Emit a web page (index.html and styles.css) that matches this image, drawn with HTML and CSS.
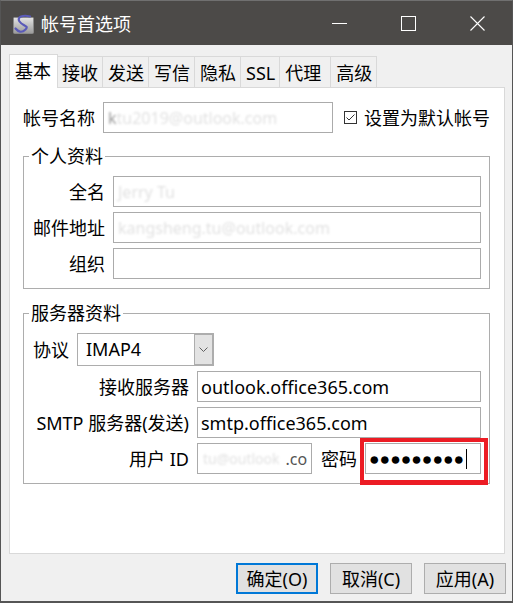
FILE: index.html
```html
<!DOCTYPE html>
<html lang="zh-CN">
<head>
<meta charset="utf-8">
<title>帐号首选项</title>
<link rel="stylesheet" href="styles.css">
</head>
<body>
<div class="window">
  <div class="titlebar">
    <svg class="app-icon" viewBox="0 0 21 20">
      <defs>
        <linearGradient id="ig" x1="0" y1="0" x2="0" y2="1">
          <stop offset="0" stop-color="#e4e4e4"/>
          <stop offset="1" stop-color="#9a9a9a"/>
        </linearGradient>
      </defs>
      <rect x="0.5" y="3.5" width="20" height="16" rx="1" fill="url(#ig)" stroke="#8a8a8a"/>
      <path d="M17 2.5 C 10 0.5, 3.5 3, 6.5 7.5 S 16.5 11.5, 12.5 15.5 S 5 17.5, 2.5 14.5" fill="none" stroke="#5a5ab8" stroke-width="2.2" stroke-linecap="round"/>
    </svg>
    <span class="title">帐号首选项</span>
    <div class="caption">
      <div class="cap-btn">
        <svg viewBox="0 0 15 15"><path d="M0 7.5 H15" stroke="#fff" stroke-width="1"/></svg>
      </div>
      <div class="cap-btn">
        <svg viewBox="0 0 15 15"><rect x="0.5" y="0.5" width="14" height="14" fill="none" stroke="#fff" stroke-width="1"/></svg>
      </div>
      <div class="cap-btn">
        <svg viewBox="0 0 15 15"><path d="M0.5 0.5 L14.5 14.5 M14.5 0.5 L0.5 14.5" stroke="#fff" stroke-width="1.1"/></svg>
      </div>
    </div>
  </div>

  <div class="client">
    <div class="tabs">
      <div class="tab active">基本</div>
      <div class="tab">接收</div>
      <div class="tab">发送</div>
      <div class="tab">写信</div>
      <div class="tab">隐私</div>
      <div class="tab">SSL</div>
      <div class="tab tab-wide">代理</div>
      <div class="tab">高级</div>
    </div>

    <div class="panel">
      <div class="account-row">
        <span class="lbl">帐号名称</span>
        <div class="field account-field"><span class="redacted dark-start">k</span><span class="redacted">tu2019@outlook.com</span></div>
        <div class="check-wrap">
          <svg class="checkbox" viewBox="0 0 13 13">
            <rect x="0.5" y="0.5" width="12" height="12" fill="#fff" stroke="#333"/>
            <path d="M2.5 6.5 L5 9 L10.5 3.5" fill="none" stroke="#333" stroke-width="1"/>
          </svg>
          <span>设置为默认帐号</span>
        </div>
      </div>

      <fieldset class="group personal">
        <legend>个人资料</legend>
        <div class="form-grid personal-grid">
          <span class="lbl right">全名</span>
          <div class="field"><span class="redacted">Jerry Tu</span></div>
          <span class="lbl right">邮件地址</span>
          <div class="field"><span class="redacted">kangsheng.tu@outlook.com</span></div>
          <span class="lbl right">组织</span>
          <div class="field"></div>
        </div>
      </fieldset>

      <fieldset class="group server">
        <legend>服务器资料</legend>
        <div class="proto-row">
          <span class="lbl">协议</span>
          <div class="select">
            <span class="select-value">IMAP4</span>
            <span class="select-btn">
              <svg viewBox="0 0 9 5"><path d="M0.5 0.5 L4.5 4.5 L8.5 0.5" fill="none" stroke="#606060" stroke-width="1"/></svg>
            </span>
          </div>
        </div>
        <div class="form-grid server-grid">
          <span class="lbl right">接收服务器</span>
          <div class="field">outlook.office365.com</div>
          <span class="lbl right">SMTP 服务器(发送)</span>
          <div class="field">smtp.office365.com</div>
          <span class="lbl right">用户 ID</span>
          <div class="cred-row">
            <div class="field user-id"><span class="redacted id-part">tu@outlook</span><span class="tail">.co</span></div>
            <span class="lbl pw-label">密码</span>
            <div class="pw-wrap">
              <div class="field pw"><span class="dots">●●●●●●●●●</span><span class="caret"></span></div>
              <div class="highlight"></div>
            </div>
          </div>
        </div>
      </fieldset>
    </div>

    <div class="buttons">
      <div class="btn default">确定(O)</div>
      <div class="btn">取消(C)</div>
      <div class="btn">应用(A)</div>
    </div>
  </div>
</div>
</body>
</html>
```

FILE: styles.css
```css
html, body {
  margin: 0;
  padding: 0;
}
body {
  width: 513px;
  height: 603px;
  overflow: hidden;
  font-family: "Noto Sans", "Noto Sans CJK SC", sans-serif;
  font-size: 18px;
  color: #000;
  background: #4c4a48;
}
.window {
  box-sizing: border-box;
  width: 513px;
  height: 603px;
  display: flex;
  flex-direction: column;
  border: 1px solid #555;
  border-top-color: #707070;
  border-bottom-width: 2px;
  background: #f0f0f0;
}
.titlebar {
  flex: none;
  height: 44px;
  background: #4c4a48;
  color: #fff;
  display: flex;
  align-items: center;
}
.app-icon {
  width: 21px;
  height: 20px;
  margin-left: 12px;
  margin-right: 7px;
  margin-top: 2px;
}
.title {
  font-size: 18px;
  line-height: 24px;
  margin-top: 1px;
}
.caption {
  margin-left: auto;
  display: flex;
  height: 100%;
}
.cap-btn {
  width: 69px;
  display: flex;
  align-items: center;
  justify-content: center;
}
.cap-btn svg {
  width: 15px;
  height: 15px;
  display: block;
  margin-top: 1px;
}

.client {
  flex: 1;
  min-height: 0;
  display: flex;
  flex-direction: column;
  padding: 9px 7px 7px 8px;
}

.tabs {
  flex: none;
  height: 33px;
  display: flex;
  align-items: flex-end;
  padding-left: 2px;
  position: relative;
  z-index: 1;
}
.tab {
  box-sizing: border-box;
  height: 31px;
  line-height: 30px;
  padding: 1px 4px 0 5px;
  border: 1px solid #d9d9d9;
  border-bottom: none;
  border-right: none;
  background: #f0f0f0;
  white-space: nowrap;
}
.tab:last-child {
  border-right: 1px solid #d9d9d9;
}
.tab-wide {
  padding-right: 9px;
}
.tab.active {
  height: 34px;
  line-height: 32px;
  margin: 0 -2px -1px -2px;
  padding: 0 6px 0 5px;
  background: #fff;
  border-right: 1px solid #d9d9d9;
  position: relative;
  z-index: 2;
}

.panel {
  flex: 1;
  min-height: 0;
  background: #fff;
  border: 1px solid #d9d9d9;
  padding: 14px 14px 0 13px;
}

.lbl {
  white-space: nowrap;
  line-height: 24px;
}
.lbl.right {
  text-align: right;
}

.field {
  box-sizing: border-box;
  height: 31px;
  border: 1px solid #ababab;
  background: #fff;
  display: flex;
  align-items: center;
  padding: 0 3px;
  overflow: hidden;
  white-space: nowrap;
  line-height: 24px;
}
.redacted {
  color: #e2e2e2;
  filter: blur(1.3px);
  font-size: 16px;
}
.dark-start {
  color: #9a9a9a;
}

.account-row {
  display: flex;
  align-items: center;
}
.account-field {
  width: 230px;
  margin-left: 8px;
  padding-left: 4px;
}
.check-wrap {
  display: flex;
  align-items: center;
  margin-left: 11px;
  white-space: nowrap;
  line-height: 24px;
}
.checkbox {
  width: 13px;
  height: 13px;
  margin-right: 7px;
  display: block;
}

.group {
  margin: 11px 0 0;
  padding: 8px 8px 9px 9px;
  border: 1px solid #adadad;
  min-width: 0;
}
.group.server {
  margin-top: 12px;
}
.group legend {
  padding: 0 2px;
  margin-left: -4px;
  line-height: 24px;
  font-size: 18px;
}

.form-grid {
  display: grid;
  column-gap: 8px;
  row-gap: 5px;
  align-items: center;
}
.personal-grid {
  grid-template-columns: 72px 1fr;
}
.personal-grid .field {
  padding-left: 4px;
}
.server-grid {
  grid-template-columns: 156px 1fr;
  margin-top: 5px;
}

.proto-row {
  display: flex;
  align-items: center;
}
.select {
  box-sizing: border-box;
  width: 137px;
  height: 33px;
  margin-left: 8px;
  border: 1px solid #adadad;
  background: #fff;
  display: flex;
}
.select-value {
  flex: 1;
  padding-left: 8px;
  line-height: 31px;
}
.select-btn {
  box-sizing: border-box;
  width: 19px;
  background: #e3e3e3;
  border: 1px solid #adadad;
  display: flex;
  align-items: center;
  justify-content: center;
}
.select-btn svg {
  width: 9px;
  height: 5px;
  display: block;
}

.cred-row {
  display: flex;
  align-items: center;
}
.user-id {
  width: 115px;
  flex: none;
  padding: 0 0 0 5px;
}
.id-part {
  font-size: 14px;
  margin-right: 6px;
}
.user-id .tail {
  color: #555;
  font-size: 16px;
}
.pw-label {
  margin: 0 8px 0 9px;
}
.pw-wrap {
  flex: 1;
  position: relative;
}
.pw {
  padding-left: 3px;
}
.dots {
  font-family: "Liberation Sans", sans-serif;
  font-size: 17.5px;
  letter-spacing: 0;
}
.caret {
  width: 1px;
  height: 20px;
  background: #000;
  margin-left: 2px;
}
.highlight {
  position: absolute;
  left: -5px;
  top: -5px;
  right: -7px;
  bottom: -11px;
  border: 4px solid #ec1c24;
  border-bottom-width: 5px;
  pointer-events: none;
}

.buttons {
  flex: none;
  display: flex;
  justify-content: flex-end;
  gap: 12px;
  margin-top: 9px;
  margin-right: -1px;
}
.btn {
  box-sizing: border-box;
  width: 82px;
  height: 31px;
  border: 1px solid #adadad;
  background: #e1e1e1;
  display: flex;
  align-items: center;
  justify-content: center;
  line-height: 24px;
  white-space: nowrap;
}
.btn.default {
  border: 2px solid #0078d7;
}
```
